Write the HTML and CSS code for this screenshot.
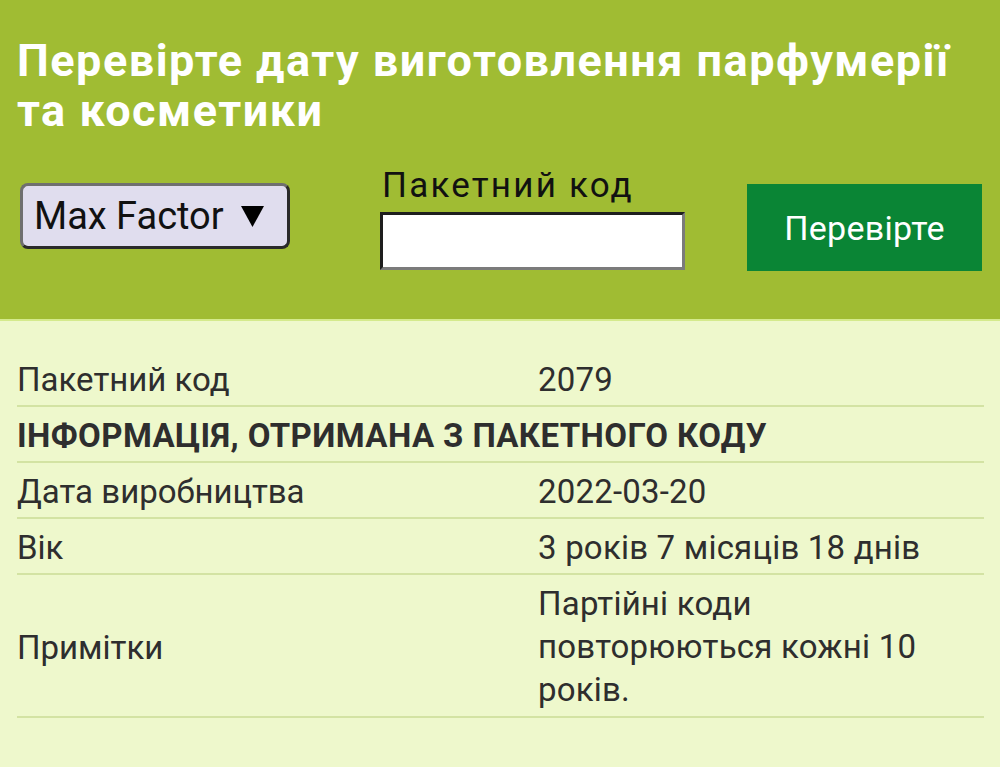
FILE: index.html
```html
<!DOCTYPE html>
<html lang="uk">
<head>
<meta charset="utf-8">
<title>Перевірте дату виготовлення</title>
<link rel="stylesheet" href="styles.css">
</head>
<body>
<header class="hero">
  <h1 class="title">Перевірте дату виготовлення парфумерії та косметики</h1>
  <form class="checker">
    <div class="brand-select">Max Factor <svg class="arrow" width="23" height="21" viewBox="0 0 23 21"><polygon points="0,0 23,0 11.5,21" fill="#000"/></svg></div>
    <div class="code-field">
      <label class="code-label" for="code">Пакетний код</label>
      <input class="code-input" id="code" type="text">
    </div>
    <button class="check-btn" type="button">Перевірте</button>
  </form>
</header>
<main class="result">
  <div class="row">
    <div class="cell key">Пакетний код</div>
    <div class="cell val">2079</div>
  </div>
  <div class="row">
    <div class="cell head">ІНФОРМАЦІЯ, ОТРИМАНА З ПАКЕТНОГО КОДУ</div>
  </div>
  <div class="row">
    <div class="cell key">Дата виробництва</div>
    <div class="cell val">2022-03-20</div>
  </div>
  <div class="row">
    <div class="cell key">Вік</div>
    <div class="cell val">3 років 7 місяців 18 днів</div>
  </div>
  <div class="row">
    <div class="cell key">Примітки</div>
    <div class="cell val notes">Партійні коди повторюються кожні 10 років.</div>
  </div>
</main>
</body>
</html>
```
FILE: styles.css
```css
html, body {
  margin: 0;
  padding: 0;
}
body {
  font-family: Roboto, "Liberation Sans", sans-serif;
  background: #eef8cc;
  color: #2e2e2e;
}
.hero {
  background: #a0bc33;
  border-bottom: 2px solid #d4ea8c;
  padding: 36px 17px 0;
  height: 283px;
}
.title {
  margin: 0;
  color: #ffffff;
  font-size: 45px;
  line-height: 50px;
  font-weight: 700;
  letter-spacing: 1.5px;
}
.checker {
  display: flex;
  align-items: flex-start;
  margin-top: 31px;
}
.brand-select {
  margin-top: 16px;
  margin-left: 3px;
  width: 270px;
  height: 66px;
  box-sizing: border-box;
  border: 3px solid;
  border-color: #6f6f6f #2a2a2a #2a2a2a #6f6f6f;
  border-radius: 8px;
  background: #e0ddee;
  color: #111;
  font-size: 38px;
  line-height: 60px;
  padding-left: 11px;
  white-space: nowrap;
}
.arrow {
  margin-left: 8px;
  vertical-align: 2px;
}
.code-field {
  display: flex;
  flex-direction: column;
  margin-left: 90px;
}
.code-label {
  font-size: 35px;
  line-height: 38px;
  color: #111;
  padding-left: 2px;
  margin-bottom: 7px;
  letter-spacing: 2.2px;
}
.code-input {
  width: 305px;
  height: 58px;
  box-sizing: border-box;
  border: 3px solid;
  border-color: #1e1e1e #7b7b7b #7b7b7b #1e1e1e;
  background: #fff;
  margin: 0;
  padding: 0 6px;
  font-size: 30px;
}
.check-btn {
  margin-left: 62px;
  margin-top: 17px;
  width: 235px;
  height: 87px;
  border: 0;
  background: #0a8535;
  color: #fff;
  font-family: Roboto, "Liberation Sans", sans-serif;
  font-size: 34px;
  letter-spacing: 0.3px;
  padding: 0;
}
.result {
  padding: 30px 16px 40px 17px;
}
.row {
  display: grid;
  grid-template-columns: 521px 1fr;
  border-bottom: 2px solid #d3e3a3;
}
.cell {
  font-size: 33px;
  line-height: 43px;
  padding: 7px 0 4px;
}
.key {
  display: flex;
  align-items: center;
}
.val {
  padding-right: 46px;
  letter-spacing: 0.2px;
}
.notes {
  padding-bottom: 5px;
}
.head {
  grid-column: 1 / -1;
  font-weight: 700;
  font-size: 33px;
  letter-spacing: 0.4px;
}
```
